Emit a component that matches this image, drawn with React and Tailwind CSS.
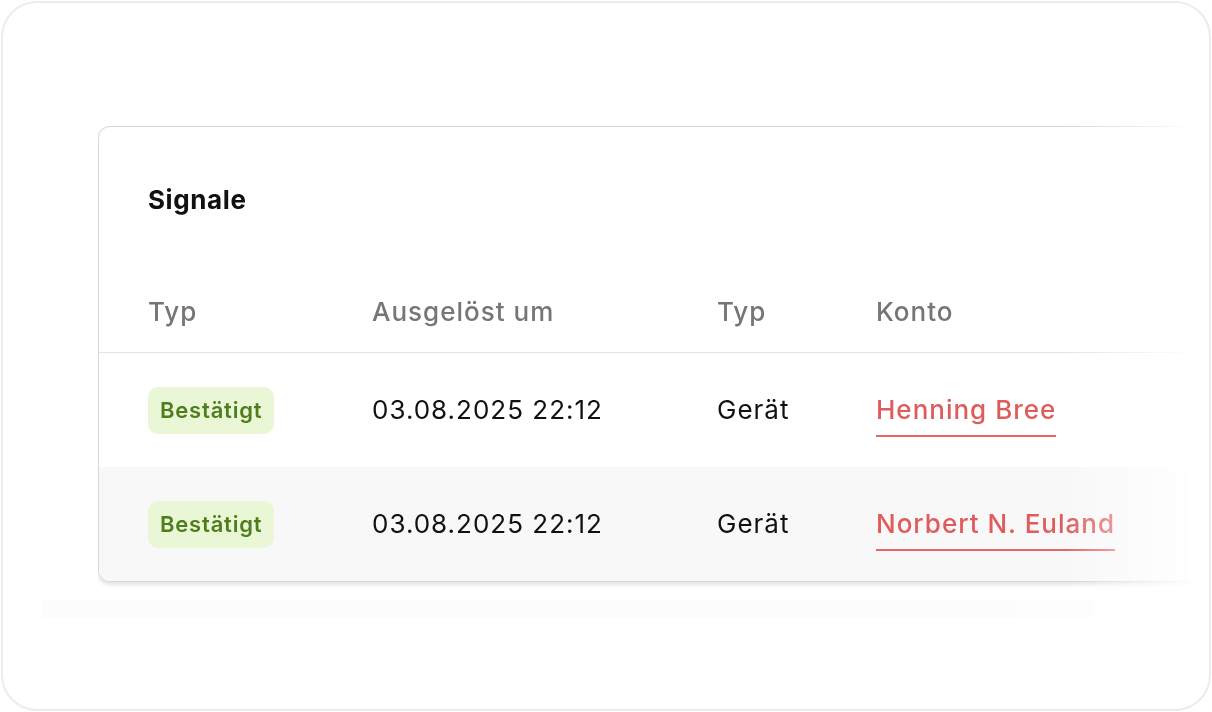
import React from 'react';

const rows = [
  { status: 'Bestätigt', time: '03.08.2025 22:12', type: 'Gerät', account: 'Henning Bree' },
  { status: 'Bestätigt', time: '03.08.2025 22:12', type: 'Gerät', account: 'Norbert N. Euland' },
];

const cols = 'grid grid-cols-[224px_345px_159px_1fr] items-center pl-[49px]';

const StatusBadge = ({ label }) => (
  <span className="inline-flex h-[47px] items-center rounded-[10px] bg-[#eaf7d7] px-[12px] text-[22px] font-semibold tracking-[0.8px] text-[#4f7d1c]">
    {label}
  </span>
);

export default function App() {
  return (
    <div
      className="h-[712px] w-[1212px] bg-white p-px"
      style={{ fontFamily: 'Inter, "Noto Sans", sans-serif' }}
    >
      <div className="h-full overflow-hidden rounded-[36px] border-2 border-[#ececec] pl-[95px] pt-[123px]">
        <div className="pb-3 [mask-image:linear-gradient(to_right,black_87%,transparent_99%)]">
          <div className="overflow-hidden rounded-[12px] border border-[#d6d6d6] bg-white shadow-[0_2px_5px_rgba(0,0,0,0.14)]">
            <div className="pl-[49px] pt-[57px] text-[26px] font-bold leading-[32px] tracking-[0.6px] text-[#111]">
              Signale
            </div>

            <div className={`${cols} border-b border-[#e4e4e4] pb-[24px] pt-[80px] text-[26px] font-medium leading-[32px] tracking-[1px] text-[#767676]`}>
              <div>Typ</div>
              <div>Ausgelöst um</div>
              <div>Typ</div>
              <div>Konto</div>
            </div>

            {rows.map((row, i) => (
              <div
                key={row.account}
                className={`${cols} h-[114px] text-[26px] leading-[32px] tracking-[1px] text-[#111] ${i % 2 ? 'bg-[#f8f8f8]' : 'bg-white'}`}
              >
                <div>
                  <StatusBadge label={row.status} />
                </div>
                <div>{row.time}</div>
                <div>{row.type}</div>
                <div>
                  <span className="inline-block translate-y-[5px] border-b-2 border-[#e26767] pb-[9px] font-medium text-[#e05c5c]">
                    {row.account}
                  </span>
                </div>
              </div>
            ))}
          </div>
        </div>

        {/* faint ghost card peeking out below */}
        <div className="-ml-[55px] mt-[6px] h-[18px] bg-[#fcfcfc] [mask-image:linear-gradient(to_right,black_80%,transparent)]" />
      </div>
    </div>
  );
}
